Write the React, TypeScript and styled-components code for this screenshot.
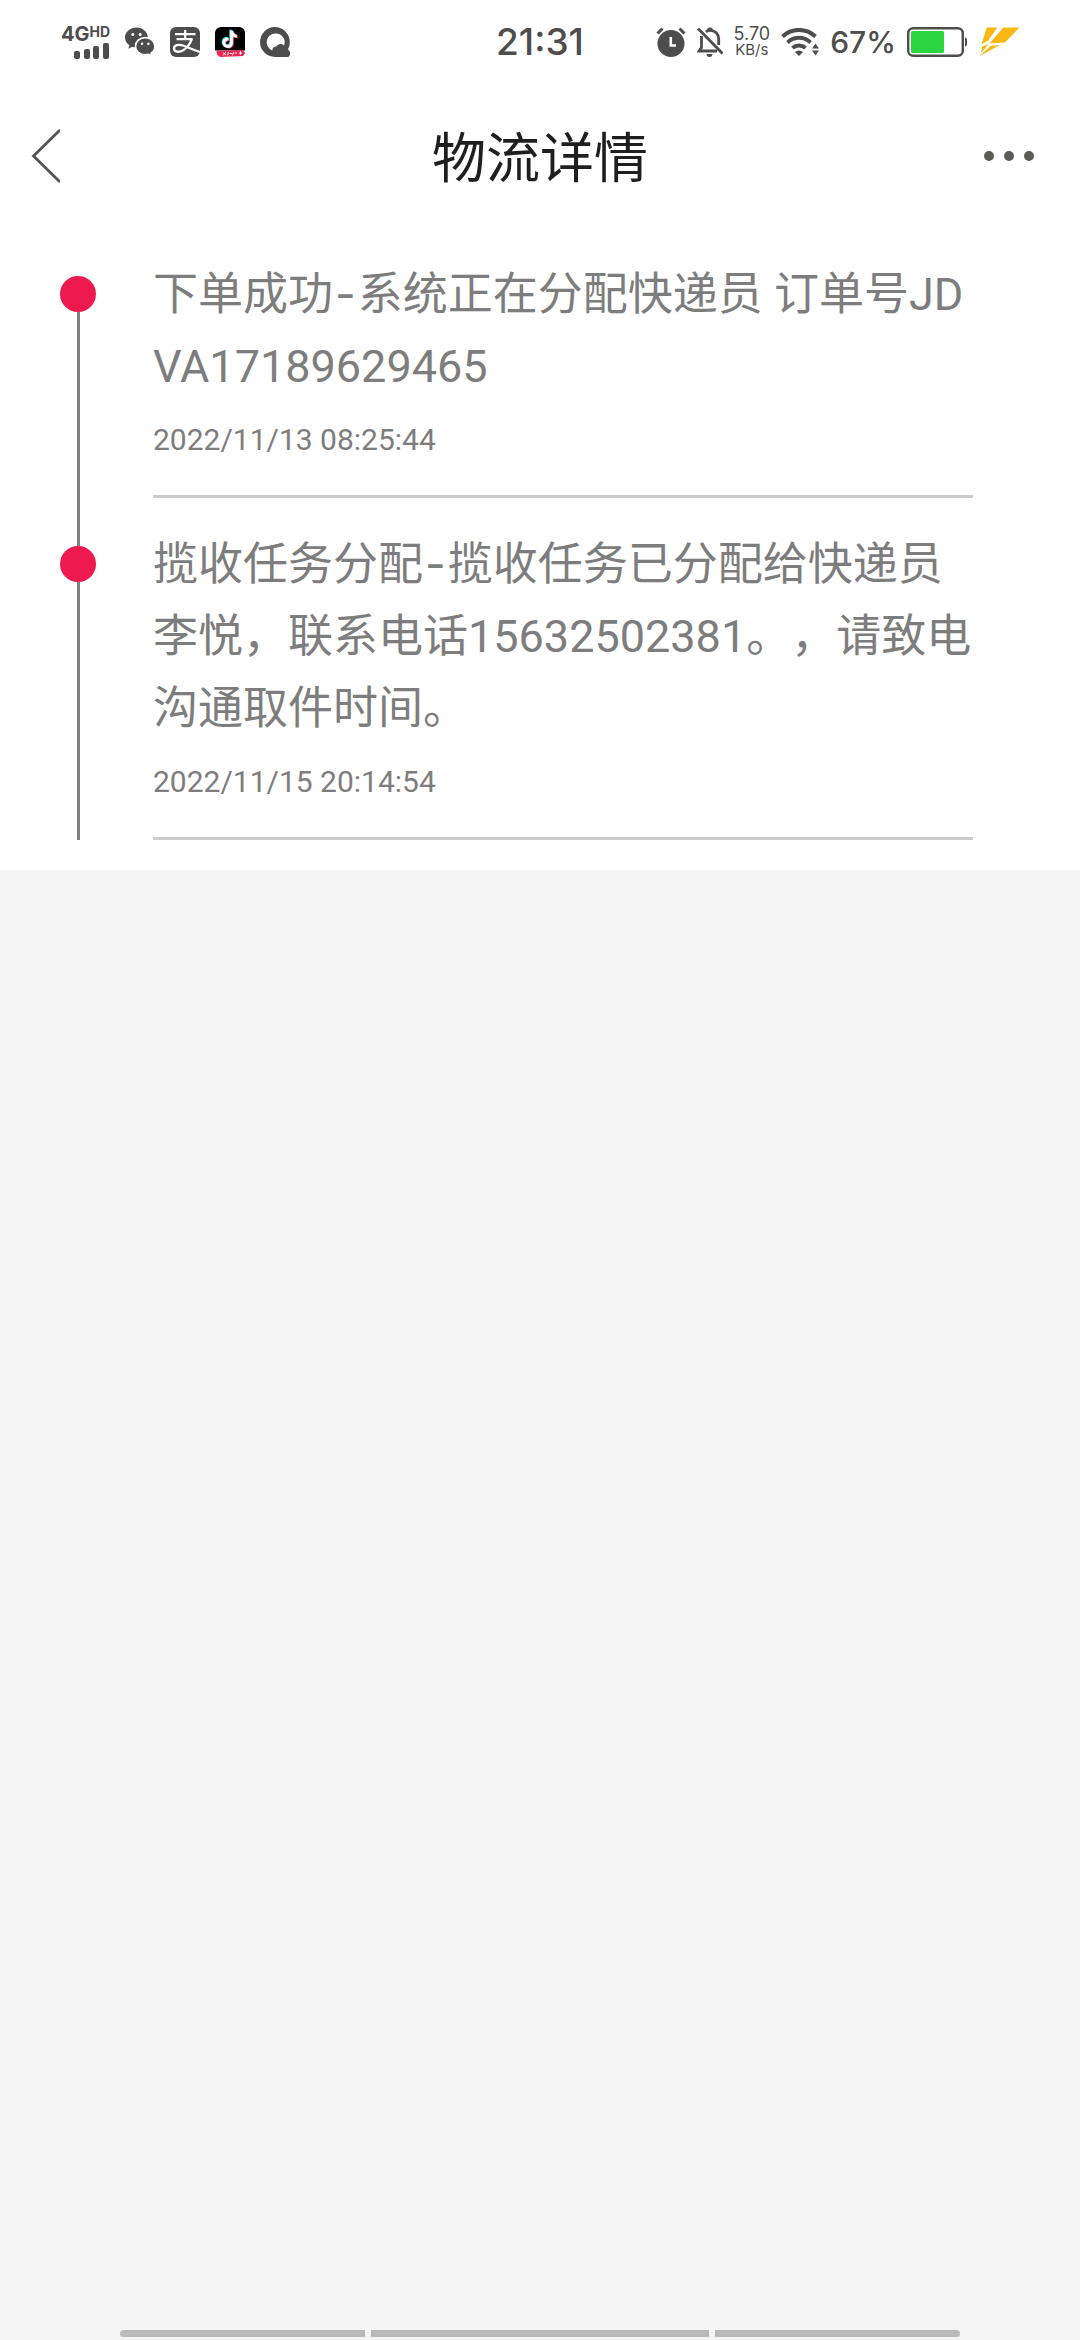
import React from "react";
import styled, { createGlobalStyle } from "styled-components";

const GlobalStyle = createGlobalStyle`
  * {
    box-sizing: border-box;
  }

  body {
    margin: 0;
    background: #f5f5f5;
    font-family: Roboto, "Noto Sans CJK SC", sans-serif;
    text-spacing-trim: space-all;
  }
`;

const Page = styled.div`
  display: flex;
  flex-direction: column;
  min-height: 100vh;
`;

const StatusBar = styled.div`
  display: grid;
  grid-template-columns: 1fr auto 1fr;
  align-items: center;
  height: 84px;
  padding: 0 60px;
  background: #fff;
  color: #4d4d4d;
  font-family: Inter, "Noto Sans CJK SC", sans-serif;
`;

const StatusGroup = styled.div<{ $end?: boolean; $gap: number }>`
  display: flex;
  align-items: center;
  justify-content: ${(p) => (p.$end ? "flex-end" : "flex-start")};
  gap: ${(p) => p.$gap}px;

  svg {
    display: block;
    flex: none;
  }
`;

const Clock = styled.time`
  font-size: 37px;
  line-height: 40px;
  font-weight: 500;
`;

const Signal = styled.div`
  display: flex;
  flex-direction: column;
  align-items: flex-end;
  gap: 1px;
  width: 50px;
`;

const Network = styled.span`
  display: flex;
  align-items: flex-start;
  font-size: 20px;
  line-height: 16px;
  font-weight: 700;
`;

const NetworkTag = styled.span`
  font-size: 14px;
  line-height: 12px;
`;

const Speed = styled.div`
  display: flex;
  flex-direction: column;
  align-items: center;
  font-size: 18px;
  line-height: 16px;
`;

const SpeedUnit = styled.span`
  font-size: 15px;
`;

const Percent = styled.span`
  font-size: 30px;
  line-height: 36px;
  font-weight: 500;
`;

const Header = styled.header`
  display: grid;
  grid-template-columns: 1fr auto 1fr;
  align-items: center;
  height: 144px;
  padding: 0 45px 0 30px;
  background: #fff;
`;

const Title = styled.h1`
  margin: 0;
  padding: 8px 0 0 15px;
  color: #1f1f1f;
  font-size: 54px;
  line-height: 72px;
  font-weight: 400;
`;

const IconButton = styled.button<{ $end?: boolean }>`
  justify-self: ${(p) => (p.$end ? "end" : "start")};
  padding: 0;
  border: 0;
  background: none;
  cursor: pointer;

  svg {
    display: block;
  }
`;

const Timeline = styled.ol`
  margin: 0;
  padding: 0 107px 30px 60px;
  background: #fff;
  list-style: none;
`;

const Step = styled.li`
  display: flex;
  gap: 57px;
`;

const Rail = styled.div<{ $first: boolean }>`
  display: flex;
  flex: none;
  flex-direction: column;
  align-items: center;
  width: 36px;

  &::before {
    content: "";
    width: 3px;
    height: 48px;
    background: ${(p) => (p.$first ? "transparent" : "#808080")};
  }

  &::after {
    content: "";
    flex: 1;
    width: 3px;
    background: #808080;
  }
`;

const Dot = styled.span`
  width: 36px;
  height: 36px;
  border-radius: 50%;
  background: #ed1a50;
`;

const StepBody = styled.div`
  flex: 1;
  min-width: 0;
  padding: 30px 0;
  border-bottom: 3px solid #ccc;
  color: #7d7d7d;
`;

const Message = styled.p`
  margin: 0;
  font-size: 45px;
  line-height: 72px;
  word-break: break-all;
`;

const Dash = styled.span`
  padding: 0 2px;
  font-family: Inter, sans-serif;
`;

const Stamp = styled.time`
  display: block;
  margin-top: 12px;
  font-size: 30px;
  line-height: 50px;
`;

const GestureBar = styled.nav`
  display: flex;
  gap: 6px;
  margin-top: auto;
  padding: 0 120px 3px;
`;

const GestureZone = styled.button<{ $grow: number }>`
  flex: ${(p) => p.$grow} 1 0;
  height: 7px;
  padding: 0;
  border: 0;
  background: #bababa;

  &:first-child {
    border-radius: 4px 0 0 4px;
  }

  &:last-child {
    border-radius: 0 4px 4px 0;
  }
`;

const SignalBars = () => (
  <svg width="36" height="16" viewBox="0 0 36 16" fill="currentColor" aria-hidden="true">
    <rect x="0" y="8" width="6" height="8" rx="2" />
    <rect x="10" y="6" width="6" height="10" rx="2" />
    <rect x="19" y="3" width="6" height="13" rx="2" />
    <rect x="29" y="0" width="6" height="16" rx="2" />
  </svg>
);

const WechatIcon = () => (
  <svg width="30" height="30" viewBox="0 0 30 30" fill="currentColor" aria-hidden="true">
    <path d="M11.500.5C5.200.5 0 5 0 10.500c0 3.200 1.700 6 4.400 7.800L3.300 21.800l4-2.100c1.300.4 2.700.6 4.200.6 6.300 0 11.300-4.400 11.300-9.900S17.800.5 11.500.5z" />
    <path
      d="M20.200 10.600c-5.400 0-9.700 3.800-9.700 8.600s4.300 8.600 9.700 8.600c1.200 0 2.400-.2 3.400-.5l3.400 1.900-.9-3.100c2.300-1.500 3.800-4 3.800-6.900 0-4.800-4.300-8.600-9.700-8.600z"
      stroke="#fff"
      strokeWidth="1.600"
    />
    <g fill="#fff">
      <circle cx="7.800" cy="7.500" r="1.500" />
      <circle cx="15.200" cy="7.500" r="1.500" />
      <circle cx="17" cy="16.800" r="1.300" />
      <circle cx="23.400" cy="16.800" r="1.300" />
    </g>
  </svg>
);

const AlipayIcon = () => (
  <svg width="30" height="30" viewBox="0 0 30 30" aria-hidden="true">
    <rect width="30" height="30" rx="6" fill="currentColor" />
    <g fill="none" stroke="#fff" strokeWidth="2.300">
      <path d="M5 7.200H25.500M15.200 3V12M6.500 12.200H22.500" />
      <path d="M21.800 12c-1.500 4.500-5 9-9 11.500-3.500 2-8.800 1.800-8.800-2 0-3.500 4.500-4.500 9-3 4.500 1.500 9 4 17 6.500" />
    </g>
  </svg>
);

const NOTE =
  "M15.600 3.500h3.200c.3 2.700 1.900 4.400 4.400 4.700v3.300c-1.600 0-3.100-.5-4.400-1.400v6.700c0 4-2.800 6.400-6 6.400-3.400 0-6-2.600-6-5.900 0-3.700 3-6.300 6.800-5.900v3.400c-1.900-.5-3.500.7-3.500 2.500 0 1.500 1.200 2.600 2.700 2.600 1.700 0 2.800-1.200 2.800-3z";

const TiktokIcon = () => (
  <svg width="30" height="30" viewBox="0 0 30 30" aria-hidden="true">
    <rect width="30" height="30" rx="6" fill="#000" />
    <path d="M0 23.500H30V30H0z" fill="#fff" />
    <g transform="translate(1.500 .6) scale(.88)">
      <path d={NOTE} fill="#25f4ee" transform="translate(-1 -1)" />
      <path d={NOTE} fill="#fe2c55" transform="translate(1 .6)" />
      <path d={NOTE} fill="#fff" />
    </g>
    <path d="M1.500 24 28 23 30 26l-2 3-23 1-3-2.500z" fill="#ee2550" />
    <path
      d="M8 28.500l3-3.500M8 25.500l3 2.500M13.500 25l-1 3.500M14.500 26.500h2.500M18.500 25l-1 3.500M19.500 26h2.500M25.500 24v4M24 26h3"
      stroke="#fff"
      strokeWidth=".9"
      fill="none"
    />
  </svg>
);

const BrowserIcon = () => (
  <svg width="30" height="30" viewBox="0 0 30 30" aria-hidden="true">
    <path
      d="M15 0a15 15 0 1 0 0 30h11.500a3.500 3.500 0 0 0 3.300-5.200l-1.800-2.600A15 15 0 0 0 15 0z"
      fill="currentColor"
    />
    <path
      d="M15.300 6.500a8.800 8.800 0 0 0-3 17c0-2.600 1.500-4 4-4 1-2 2.900-2.900 4.900-2.500 1.200.1 2.100.6 2.900 1.400A8.800 8.800 0 0 0 15.300 6.500z"
      fill="#fff"
    />
  </svg>
);

const AlarmIcon = () => (
  <svg width="30" height="30" viewBox="0 0 30 30" aria-hidden="true">
    <circle cx="15" cy="16.500" r="13.500" fill="currentColor" />
    <path d="M1.500 6.500 6.500 1.500M28.500 6.500 23.500 1.500" stroke="currentColor" strokeWidth="3" />
    <path d="M14.800 10v8.500H20" stroke="#fff" strokeWidth="2.600" fill="none" />
  </svg>
);

const MutedBellIcon = () => (
  <svg width="26" height="30" viewBox="0 0 26 30" fill="none" stroke="currentColor" strokeWidth="2.800" aria-hidden="true">
    <path d="M1 1.500 25.500 26.500" />
    <path d="M4.500 9v11.500L2 24h18M9 5c1-1 2.500-1.600 4-1.600 5 0 8.700 3.600 8.700 8.600v6" />
    <path d="M9.500 27h6a3 3 0 0 1-6 0zM10 3.500h6a3 3 0 0 0-6 0z" fill="currentColor" stroke="none" />
  </svg>
);

const WifiIcon = () => (
  <svg width="38" height="28" viewBox="0 0 38 28" fill="none" stroke="currentColor" strokeWidth="4" aria-hidden="true">
    <path d="M1.500 8.500a24 24 0 0 1 33 0" />
    <path d="M6.500 14.500a16.500 16.500 0 0 1 23 0" />
    <path d="M11.500 20a9.500 9.500 0 0 1 13 0" />
    <path d="M14 24a6 6 0 0 1 8 0L18 28z" fill="currentColor" stroke="none" />
    <path d="M34.500 15.500 38 20.500H31zM34.500 27.500 38 22.500H31z" fill="currentColor" stroke="none" />
  </svg>
);

const BatteryIcon = () => (
  <svg width="60" height="30" viewBox="0 0 60 30" aria-hidden="true">
    <rect x="1.200" y="1.200" width="54.600" height="27.600" rx="5" fill="#fff" stroke="currentColor" strokeWidth="2.400" />
    <path d="M58 10.500c1.200.4 2 1 2 2.500v4c0 1.500-.8 2.100-2 2.500z" fill="currentColor" />
    <rect x="4" y="4" width="33" height="22" rx="1.500" fill="#2bd640" />
  </svg>
);

const BoltIcon = () => (
  <svg width="42" height="30" viewBox="0 0 42 30" fill="#fbb813" aria-hidden="true">
    <path d="M8.700.5H19.500L10 13.500 3.500 17.500z" />
    <path d="M25.300.5H41.500L27 15.500 11.500 16.500z" />
    <path d="M4 19.500 10.500 17.200 3 26z" />
    <path d="M13 18.800 22 18 .8 29.500z" />
  </svg>
);

const BackIcon = () => (
  <svg width="30" height="54" viewBox="0 0 30 54" fill="none" stroke="#555" strokeWidth="2.800" aria-hidden="true">
    <path d="M30 1 3.500 27 30 53" />
  </svg>
);

const MoreIcon = () => (
  <svg width="52" height="12" viewBox="0 0 52 12" fill="#5c5c54" aria-hidden="true">
    <circle cx="6" cy="6" r="5" />
    <circle cx="26" cy="6" r="5" />
    <circle cx="46" cy="6" r="5" />
  </svg>
);

const steps = [
  {
    status: "下单成功",
    detail: ["系统正在分配快递员 订单号JD", "VA17189629465"],
    time: "2022/11/13 08:25:44",
  },
  {
    status: "揽收任务分配",
    detail: ["揽收任务已分配给快递员", "李悦，联系电话15632502381。，请致电", "沟通取件时间。"],
    time: "2022/11/15 20:14:54",
  },
];

export default function App() {
  return (
    <Page>
      <GlobalStyle />
      <StatusBar>
        <StatusGroup $gap={15}>
          <Signal>
            <Network>
              4G<NetworkTag>HD</NetworkTag>
            </Network>
            <SignalBars />
          </Signal>
          <WechatIcon />
          <AlipayIcon />
          <TiktokIcon />
          <BrowserIcon />
        </StatusGroup>
        <Clock>21:31</Clock>
        <StatusGroup $gap={11} $end>
          <AlarmIcon />
          <MutedBellIcon />
          <Speed>
            5.70
            <SpeedUnit>KB/s</SpeedUnit>
          </Speed>
          <WifiIcon />
          <Percent>67%</Percent>
          <BatteryIcon />
          <BoltIcon />
        </StatusGroup>
      </StatusBar>

      <Header>
        <IconButton aria-label="返回">
          <BackIcon />
        </IconButton>
        <Title>物流详情</Title>
        <IconButton aria-label="更多" $end>
          <MoreIcon />
        </IconButton>
      </Header>

      <Timeline>
        {steps.map((step, index) => (
          <Step key={step.time}>
            <Rail $first={index === 0}>
              <Dot />
            </Rail>
            <StepBody>
              <Message>
                {step.status}
                <Dash>-</Dash>
                {step.detail.map((phrase) => (
                  <span key={phrase}>{phrase}</span>
                ))}
              </Message>
              <Stamp>{step.time}</Stamp>
            </StepBody>
          </Step>
        ))}
      </Timeline>

      <GestureBar>
        <GestureZone $grow={245} aria-label="最近任务" />
        <GestureZone $grow={338} aria-label="主屏幕" />
        <GestureZone $grow={245} aria-label="后退" />
      </GestureBar>
    </Page>
  );
}
